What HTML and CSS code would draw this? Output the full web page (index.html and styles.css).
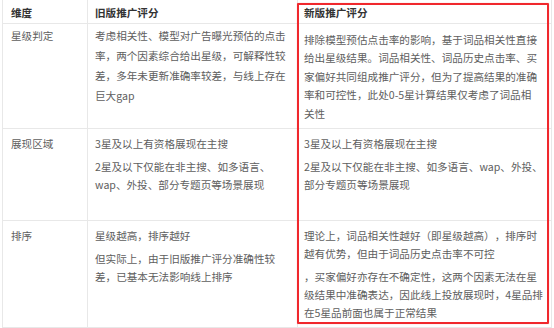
FILE: index.html
```html
<!DOCTYPE html>
<html lang="zh-CN">
<head>
<meta charset="utf-8">
<link rel="stylesheet" href="styles.css">
</head>
<body>
<div class="wrap">
  <table class="cmp">
    <colgroup>
      <col class="c1"><col class="c2"><col class="c3">
    </colgroup>
    <thead>
      <tr class="head">
        <th class="dim">维度</th>
        <th class="old">旧版推广评分</th>
        <th class="new">新版推广评分</th>
      </tr>
    </thead>
    <tbody>
      <tr class="r1">
        <td class="dim">星级判定</td>
        <td class="old">考虑相关性、模型对广告曝光预估的点击率，两个因素综合给出星级，可解释性较差，多年未更新准确率较差，与线上存在巨大gap</td>
        <td class="new"><p>排除模型预估点击率的影响，基于词品相关性直接给出星级结果。词品相关性、词品历史点击率、买家偏好共同组成推广评分，但为了提高结果的准确率和可控性，此处0-5星计算结果仅考虑了词品相<br>关性</p></td>
      </tr>
      <tr class="r2">
        <td class="dim">展现区域</td>
        <td class="old"><p>3星及以上有资格展现在主搜</p><p>2星及以下仅能在非主搜、如多语言、wap、外投、部分专题页等场景展现</p></td>
        <td class="new"><p>3星及以上有资格展现在主搜</p><p>2星及以下仅能在非主搜、如多语言、wap、外投、部分专题页等场景展现</p></td>
      </tr>
      <tr class="r3">
        <td class="dim">排序</td>
        <td class="old"><p>星级越高，排序越好</p><p>但实际上，由于旧版推广评分准确性较差，已基本无法影响线上排序</p></td>
        <td class="new"><p>理论上，词品相关性越好（即星级越高），排序时越有优势，但由于词品历史点击率不可控</p><p>，买家偏好亦存在不确定性，这两个因素无法在星级结果中准确表达，因此线上投放展现时，4星品排在5星品前面也属于正常结果</p></td>
      </tr>
    </tbody>
  </table>
  <div class="mark"></div>
</div>
</body>
</html>
```

FILE: styles.css
```css
html, body {
  margin: 0;
  padding: 0;
  background: #fff;
}
body {
  font-family: "Noto Sans CJK SC", "Noto Sans", sans-serif;
  font-size: 10.6px;
  color: #5e5e5e;
  text-spacing-trim: space-all;
}
.wrap {
  position: relative;
  width: 554px;
  height: 328px;
  overflow: hidden;
}
.cmp {
  margin-left: 2px;
  width: 549px;
  border-collapse: collapse;
  table-layout: fixed;
}
.c1 { width: 85px; }
.c2 { width: 210px; }
.c3 { width: 254px; }
.cmp th, .cmp td {
  border: 1px solid #e8e8e8;
  vertical-align: top;
  text-align: left;
  padding: 6px 7px 0 7px;
  line-height: 18px;
}
.cmp .dim {
  padding-left: 8px;
}
.cmp .new {
  padding-left: 6px;
  padding-right: 4px;
}
.cmp thead th {
  border-top: none;
  font-weight: bold;
  color: #333;
  padding-top: 3px;
  line-height: 19px;
}
.cmp p {
  margin: 0 0 5px 0;
}
.head { height: 23px; }
.r1 { height: 102px; }
.r2 { height: 92px; }
.r3 { height: 107px; }
.r1 .dim, .r1 .old {
  line-height: 20px;
  padding-top: 2px;
}
.r1 .new {
  line-height: 18.5px;
  padding-top: 7px;
}
.mark {
  position: absolute;
  left: 297px;
  top: 3px;
  width: 248px;
  height: 317px;
  border: 2px solid #f0282d;
  border-radius: 1px;
  box-shadow: 0 0 1px rgba(240, 40, 45, 0.5);
}
```
